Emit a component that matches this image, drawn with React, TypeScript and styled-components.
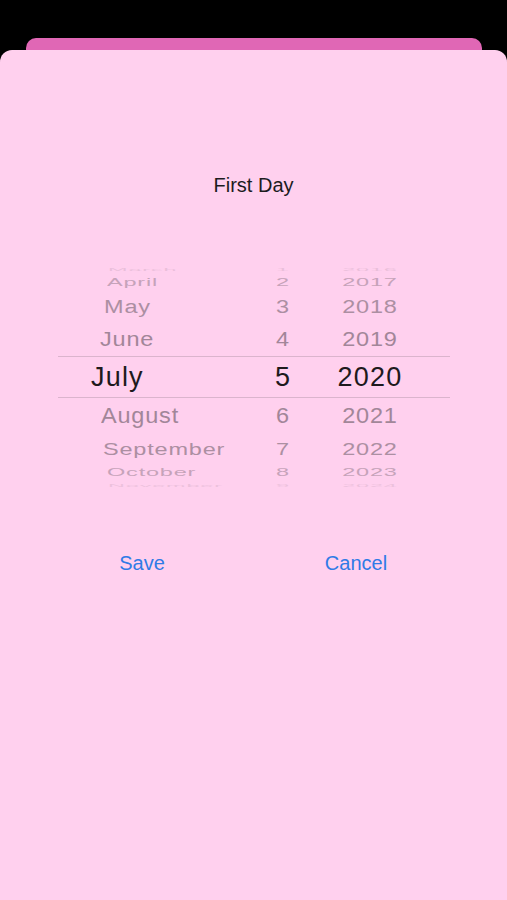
import React from 'react'
import styled, { createGlobalStyle } from 'styled-components'

const GlobalStyle = createGlobalStyle`
  html, body {
    margin: 0;
    padding: 0;
    background: #000;
  }
  body {
    font-family: 'Liberation Sans', Arial, sans-serif;
  }
`

const Screen = styled.div`
  width: 507px;
  height: 900px;
  background: #000;
  display: flex;
  flex-direction: column;
  overflow: hidden;
`

const BackCard = styled.div`
  margin: 38px 25px 0 26px;
  height: 12px;
  background: #e067b5;
  border-radius: 10px 10px 0 0;
`

const Sheet = styled.div`
  flex: 1;
  background: #ffd0ee;
  border-radius: 12px 12px 0 0;
  display: flex;
  flex-direction: column;
  padding-top: 123px;
`

const Title = styled.div`
  text-align: center;
  font-size: 20px;
  line-height: 24px;
  color: #1c1c1e;
`

const Picker = styled.div`
  margin: 70px 0 0 58px;
  width: 392px;
  display: flex;
  flex-direction: column;
`

const PickerRow = styled.div<{ $h: number; $selected?: boolean }>`
  box-sizing: border-box;
  display: flex;
  align-items: center;
  height: ${({ $h }) => $h}px;
  border-top: ${({ $selected }) => ($selected ? '1px solid #dbb4cd' : 'none')};
  border-bottom: ${({ $selected }) => ($selected ? '1px solid #dbb4cd' : 'none')};
`

const Cell = styled.span<{
  $w: number
  $scale: number
  $fade: number
  $selected?: boolean
  $indent?: number
  $center?: boolean
}>`
  flex: 0 0 ${({ $w }) => $w}px;
  box-sizing: border-box;
  white-space: nowrap;
  line-height: 1;
  padding-left: ${({ $indent }) => $indent ?? 0}px;
  text-align: ${({ $center }) => ($center ? 'center' : 'left')};
  font-size: ${({ $selected }) => ($selected ? 27 : 23.5)}px;
  letter-spacing: ${({ $selected }) => ($selected ? 1.2 : 0.8)}px;
  color: ${({ $selected }) => ($selected ? '#1e1a1d' : '#987f90')};
  opacity: ${({ $fade }) => $fade};
  transform: scaleY(${({ $scale }) => $scale});
`

const Actions = styled.div`
  margin: 61px 0 0 35px;
  width: 428px;
  display: grid;
  grid-template-columns: 1fr 1fr;
`

const ActionButton = styled.button`
  background: none;
  border: none;
  padding: 0;
  font-family: 'Liberation Sans', Arial, sans-serif;
  font-size: 20px;
  line-height: 24px;
  color: #2f7be6;
  text-align: center;
  cursor: pointer;
`

type Row = {
  month: string
  day: string
  year: string
  h: number
  scale: number
  fade: number
  indent: number
  selected?: boolean
}

const rows: Row[] = [
  { month: 'March', day: '1', year: '2016', h: 6, scale: 0.12, fade: 0.2, indent: 50 },
  { month: 'April', day: '2', year: '2017', h: 20, scale: 0.5, fade: 0.55, indent: 49 },
  { month: 'May', day: '3', year: '2018', h: 30, scale: 0.76, fade: 0.8, indent: 46 },
  { month: 'June', day: '4', year: '2019', h: 33, scale: 0.88, fade: 0.9, indent: 42 },
  { month: 'July', day: '5', year: '2020', h: 42, scale: 1, fade: 1, indent: 33, selected: true },
  { month: 'August', day: '6', year: '2021', h: 38, scale: 0.92, fade: 0.9, indent: 43 },
  { month: 'September', day: '7', year: '2022', h: 28, scale: 0.72, fade: 0.8, indent: 45 },
  { month: 'October', day: '8', year: '2023', h: 18, scale: 0.5, fade: 0.55, indent: 49 },
  { month: 'November', day: '9', year: '2024', h: 8, scale: 0.12, fade: 0.18, indent: 50 },
]

export default function App() {
  return (
    <>
      <GlobalStyle />
      <Screen>
        <BackCard />
        <Sheet>
          <Title>First Day</Title>
          <Picker>
            {rows.map((r) => (
              <PickerRow key={r.month} $h={r.h} $selected={r.selected}>
                <Cell $w={192} $scale={r.scale} $fade={r.fade} $selected={r.selected} $indent={r.indent}>
                  {r.month}
                </Cell>
                <Cell $w={66} $scale={r.scale} $fade={r.fade} $selected={r.selected} $center>
                  {r.day}
                </Cell>
                <Cell $w={108} $scale={r.scale} $fade={r.fade} $selected={r.selected} $center>
                  {r.year}
                </Cell>
              </PickerRow>
            ))}
          </Picker>
          <Actions>
            <ActionButton>Save</ActionButton>
            <ActionButton>Cancel</ActionButton>
          </Actions>
        </Sheet>
      </Screen>
    </>
  )
}
